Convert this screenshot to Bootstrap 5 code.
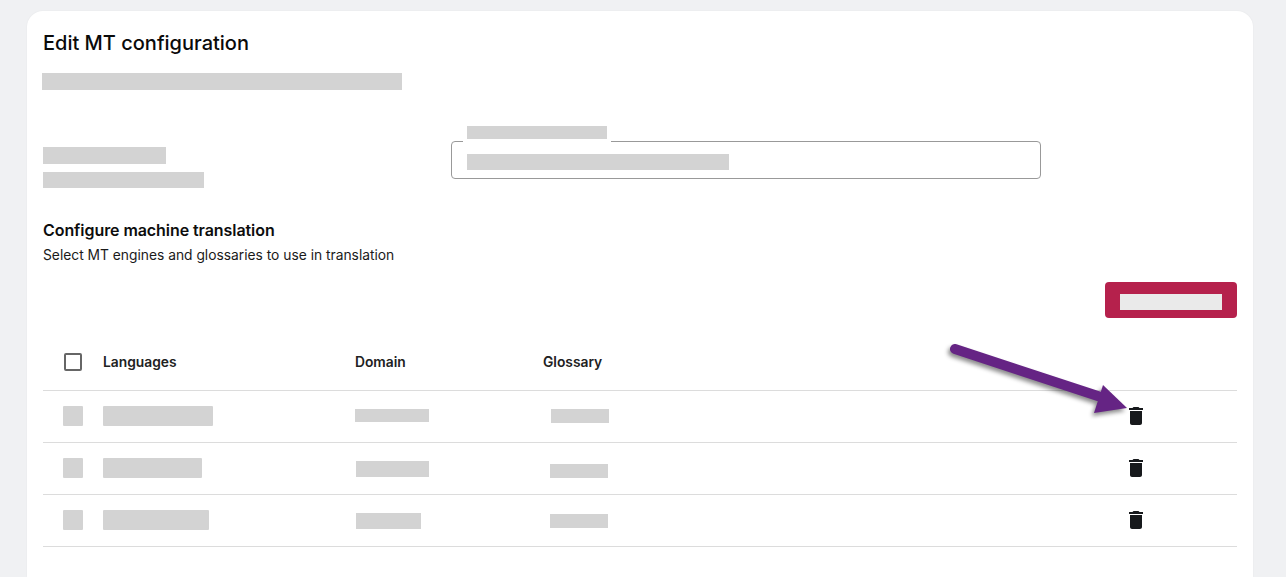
<!DOCTYPE html>
<html lang="en">
<head>
    <meta charset="UTF-8">
    <meta name="viewport" content="width=device-width, initial-scale=1.0">
    <title>Edit MT configuration</title>
    <link href="https://cdn.jsdelivr.net/npm/bootstrap@5.3.0/dist/css/bootstrap.min.css" rel="stylesheet">
    <style>
        html, body { height: 577px; overflow: hidden; }
        body { background: #f0f1f3; font-family: Inter, "Liberation Sans", sans-serif; color: #0d0d0d; position: relative; }
        .page-card { margin: 11px 33px 0 27px; padding: 20px 16px 0; height: 566px; border: 0; border-radius: 16px 16px 0 0; background: #fff; box-shadow: 0 0 2px rgba(0, 0, 0, .05); }
        .page-title { font-size: 20px; line-height: 24px; font-weight: 500; margin: 0; color: #0a0a0a; }
        .hide-bar { display: block; background: #d3d3d3; }
        .bar-intro { width: 360px; height: 17px; margin: 18px 0 0 -1px; }
        .name-row { margin-top: 36px; }
        .name-side { width: 408px; padding-top: 21px; }
        .bar-name1 { width: 123px; height: 17px; }
        .bar-name2 { width: 161px; height: 16px; margin-top: 8px; }
        .name-field { width: 590px; height: 38px; margin-top: 15px; border: 1px solid #999; border-radius: 4px; padding: 12px 0 0 15px; position: relative; }
        .field-label { position: absolute; left: 11px; top: -16px; padding: 0 4px 4px; background: #fff; }
        .bar-label { width: 140px; height: 13px; }
        .bar-value { width: 262px; height: 16px; }
        .section-title { font-size: 16px; line-height: 24px; font-weight: 600; letter-spacing: -.07px; margin: 30px 0 0; }
        .section-sub { font-size: 13.8px; line-height: 20px; margin: 3px 0 0; color: #1a1a1a; }
        .add-btn { width: 132px; height: 36px; margin-top: 17px; padding: 12px 0 8px 15px; background: #b5214c; border: 0; border-radius: 4px; }
        .bar-add { width: 102px; height: 16px; background: #eaeaea; }
        .mt-table { table-layout: fixed; width: 100%; margin: 16px 0 0; }
        .mt-table > :not(caption) > * > * { padding: 0; vertical-align: middle; border-color: #dcdcdc; }
        .mt-table th { height: 56px; font-size: 13.8px; font-weight: 600; color: #212121; }
        .mt-table td { height: 52px; }
        .mt-table > thead > tr > .head-text { padding-top: 2px; }
        .col-check { width: 60px; }
        .col-lang { width: 252px; }
        .col-domain { width: 188px; }
        .col-action { width: 200px; }
        .head-check { display: block; width: 18px; height: 18px; margin-left: 21px; border: 2px solid #666; border-radius: 2px; }
        .bar-check { width: 20px; height: 20px; margin-left: 20px; border-radius: 1px; }
        .bar-lang { height: 20px; border-radius: 1px; }
        .w-110 { width: 110px; }
        .w-99 { width: 99px; }
        .w-106 { width: 106px; }
        .bar-domain { height: 13px; margin-bottom: 2px; }
        .bar-domain-tall { height: 16px; margin: 2px 0 0 1px; }
        .w-74 { width: 74px; }
        .w-73 { width: 73px; }
        .w-65 { width: 65px; }
        .bar-gloss { width: 58px; height: 14px; margin-left: 7px; }
        .bar-gloss-first { margin-left: 8px; }
        .low-bar { margin-top: 6px; }
        .mid-bar { margin-top: 2px; }
        .bin-cell { padding-left: 87px !important; }
        .bin-icon { display: block; width: 24px; height: 24px; fill: #17191c; }
        .arrow-over { position: absolute; left: 940px; top: 335px; filter: drop-shadow(-2px 3px 2px rgba(0, 0, 0, .45)); }
    </style>
</head>

<body>
    <div class="card page-card">
        <h1 class="page-title">Edit MT configuration</h1>
        <span class="hide-bar bar-intro"></span>

        <div class="d-flex name-row">
            <div class="name-side">
                <span class="hide-bar bar-name1"></span>
                <span class="hide-bar bar-name2"></span>
            </div>
            <div class="name-field">
                <div class="field-label"><span class="hide-bar bar-label"></span></div>
                <span class="hide-bar bar-value"></span>
            </div>
        </div>

        <h2 class="section-title">Configure machine translation</h2>
        <p class="section-sub">Select MT engines and glossaries to use in translation</p>

        <div class="d-flex justify-content-end">
            <button type="button" class="btn add-btn d-block"><span class="hide-bar bar-add"></span></button>
        </div>

        <table class="table mt-table">
            <thead>
                <tr>
                    <th class="col-check"><span class="head-check"></span></th>
                    <th class="col-lang head-text">Languages</th>
                    <th class="col-domain head-text">Domain</th>
                    <th class="head-text">Glossary</th>
                    <th class="col-action"></th>
                </tr>
            </thead>
            <tbody>
                <tr>
                    <td><span class="hide-bar bar-check"></span></td>
                    <td><span class="hide-bar bar-lang w-110"></span></td>
                    <td><span class="hide-bar bar-domain w-74"></span></td>
                    <td><span class="hide-bar bar-gloss bar-gloss-first"></span></td>
                    <td class="bin-cell"><svg class="bin-icon" viewBox="0 0 24 24"><path d="M6 19c0 1.1.9 2 2 2h8c1.1 0 2-.9 2-2V7H6v12zM19 4h-3.5l-1-1h-5l-1 1H5v2h14V4z"/></svg></td>
                </tr>
                <tr>
                    <td><span class="hide-bar bar-check"></span></td>
                    <td><span class="hide-bar bar-lang w-99"></span></td>
                    <td><span class="hide-bar bar-domain-tall w-73"></span></td>
                    <td><span class="hide-bar bar-gloss low-bar"></span></td>
                    <td class="bin-cell"><svg class="bin-icon" viewBox="0 0 24 24"><path d="M6 19c0 1.1.9 2 2 2h8c1.1 0 2-.9 2-2V7H6v12zM19 4h-3.5l-1-1h-5l-1 1H5v2h14V4z"/></svg></td>
                </tr>
                <tr>
                    <td><span class="hide-bar bar-check"></span></td>
                    <td><span class="hide-bar bar-lang w-106"></span></td>
                    <td><span class="hide-bar bar-domain-tall w-65"></span></td>
                    <td><span class="hide-bar bar-gloss mid-bar"></span></td>
                    <td class="bin-cell"><svg class="bin-icon" viewBox="0 0 24 24"><path d="M6 19c0 1.1.9 2 2 2h8c1.1 0 2-.9 2-2V7H6v12zM19 4h-3.5l-1-1h-5l-1 1H5v2h14V4z"/></svg></td>
                </tr>
            </tbody>
        </table>
    </div>

    <svg class="arrow-over" width="200" height="90" viewBox="0 0 200 90">
        <line x1="15" y1="14" x2="170" y2="65" stroke="#652484" stroke-width="10" stroke-linecap="round"/>
        <polygon points="187,73 163,50 154,78" fill="#652484"/>
    </svg>
</body>
</html>
